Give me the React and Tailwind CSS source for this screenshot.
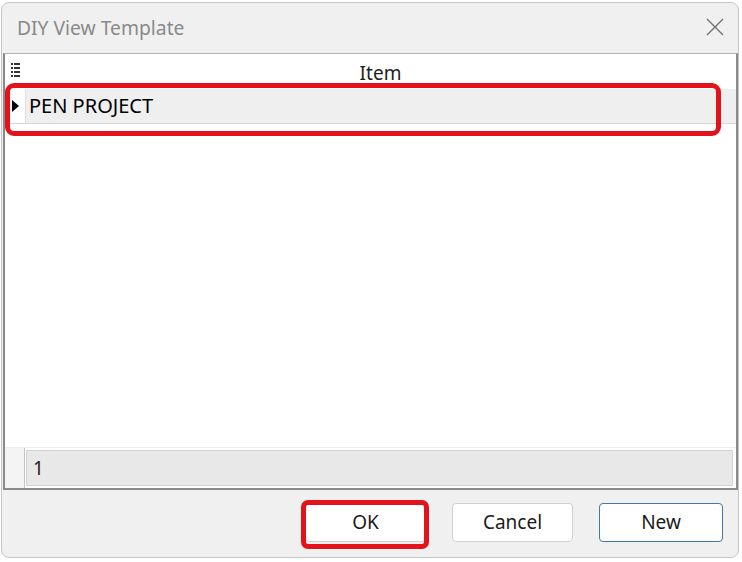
import React from 'react'

function ListIcon() {
  return (
    <svg width="9" height="17" viewBox="0 0 9 17" className="block">
      {[1, 5, 9, 13].map(y => (
        <g key={y} fill="#333">
          <rect x="0" y={y} width="2" height="2" />
          <rect x="3" y={y} width="6" height="2" />
        </g>
      ))}
    </svg>
  )
}

function Triangle() {
  return (
    <svg width="7" height="12" viewBox="0 0 7 12" className="block">
      <polygon points="0,0 7,6 0,12" fill="#000" />
    </svg>
  )
}

export default function App() {
  return (
    <div className="relative w-[742px] h-[562px] bg-white font-['Noto_Sans',sans-serif] text-[#1a1a1a]">
      <div className="absolute left-[1px] top-[2px] w-[738px] h-[556px] rounded-[8px] border border-[#c6c6c6] bg-[#f0f0f0] flex flex-col overflow-hidden">
        {/* title bar */}
        <div className="h-[50px] shrink-0 flex items-center justify-between pl-[15px] pr-[14px]">
          <span className="text-[19.3px] text-[#8a8a8a] leading-none -mt-[1px]">DIY View Template</span>
          <svg width="18" height="18" viewBox="0 0 18 18" className="-mt-[2px]">
            <path d="M1 1 L17 17 M17 1 L1 17" stroke="#6e6e6e" strokeWidth="1.3" />
          </svg>
        </div>

        {/* grid */}
        <div className="flex-1 flex flex-col bg-white border-t border-[#b4b4b4] border-l-2 border-r-2 border-b-2 border-l-[#8a8a8a] border-r-[#8a8a8a] border-b-[#8a8a8a] ml-[1px]">
          <div className="h-[35px] shrink-0 flex">
            <div className="w-[20px] shrink-0 flex justify-center pt-[8px]">
              <ListIcon />
            </div>
            <div className="flex-1 flex justify-center items-center pt-[4px] text-[19px] text-[#222]">Item</div>
          </div>
          <div className="h-[35px] shrink-0 flex border-b border-[#d6d6d6]">
            <div className="w-[20px] shrink-0 bg-white flex items-center justify-center">
              <Triangle />
            </div>
            <div className="flex-1 bg-[#efefef] border-l border-[#dedede] flex items-center pl-[3px] text-[20px] text-black">PEN PROJECT</div>
          </div>
          <div className="flex-1" />
          <div className="h-[41px] shrink-0 flex border-t border-[#ececec]">
            <div className="w-[20px] shrink-0 bg-[#f4f4f4] border-r border-[#c4c4c4]" />
            <div className="w-[707px] my-[2px] ml-[1px] bg-[#e8e8e8] border border-[#d2d2d2] flex items-center pl-[6px] text-[19px] text-[#2a1a2a]">1</div>
          </div>
        </div>

        {/* buttons */}
        <div className="h-[67px] shrink-0 flex items-center justify-end gap-[26px] pr-[15px] pb-[2px]">
          <button className="w-[121px] h-[39px] rounded-[4px] bg-white border border-[#d0d0d0] text-[19px]">OK</button>
          <button className="w-[121px] h-[39px] rounded-[4px] bg-white border border-[#d0d0d0] text-[19px]">Cancel</button>
          <button className="w-[124px] h-[39px] rounded-[4px] bg-white border-[1.5px] border-[#3f7aa3] text-[19px]">New</button>
        </div>
      </div>

      {/* annotation highlights */}
      <div className="absolute left-[5px] top-[83px] w-[716px] h-[53px] rounded-[9px] border-[5px] border-[#e3131b]" />
      <div className="absolute left-[301px] top-[500px] w-[128px] h-[49px] rounded-[7px] border-[5px] border-[#e3131b]" />
    </div>
  )
}
